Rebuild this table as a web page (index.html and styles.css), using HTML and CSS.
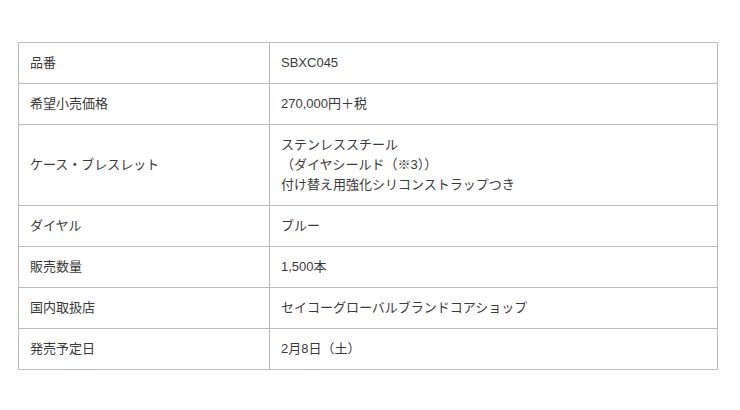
FILE: index.html
```html
<!DOCTYPE html>
<html lang="ja">
<head>
<meta charset="utf-8">
<link rel="stylesheet" href="styles.css">
</head>
<body>
<div class="wrap">
<table class="spec">
<tr><th>品番</th><td>SBXC045</td></tr>
<tr><th>希望小売価格</th><td>270,000円＋税</td></tr>
<tr><th>ケース・ブレスレット</th><td>ステンレススチール<br>（ダイヤシールド（※3））<br>付け替え用強化シリコンストラップつき</td></tr>
<tr><th>ダイヤル</th><td>ブルー</td></tr>
<tr><th>販売数量</th><td>1,500本</td></tr>
<tr><th>国内取扱店</th><td>セイコーグローバルブランドコアショップ</td></tr>
<tr><th>発売予定日</th><td>2月8日（土）</td></tr>
</table>
</div>
</body>
</html>
```
FILE: styles.css
```css
html, body {
  margin: 0;
  padding: 0;
  background: #fff;
}
.wrap {
  padding: 42px 0 0 18px;
}
.spec {
  border-collapse: collapse;
  width: 700px;
  font-family: "Liberation Sans", "Noto Sans CJK JP", sans-serif;
  font-size: 13px;
  line-height: 20px;
  color: #3a3a3a;
}
.spec th, .spec td {
  border: 1px solid #bbb;
  padding: 10px 11px;
  text-align: left;
  font-weight: normal;
  vertical-align: middle;
}
.spec th {
  width: 228px;
}
```
